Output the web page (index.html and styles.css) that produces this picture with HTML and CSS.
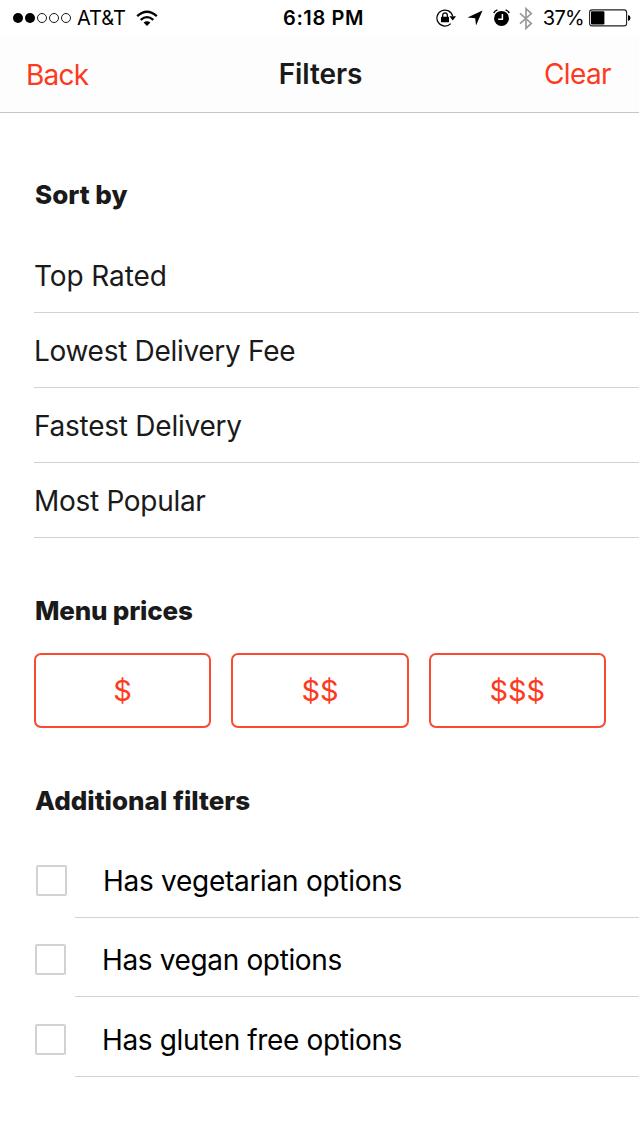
FILE: index.html
```html
<!DOCTYPE html>
<html lang="en">
<head>
    <meta charset="UTF-8">
    <meta name="viewport" content="width=device-width, initial-scale=1.0">
    <title>Filters</title>
    <link rel="stylesheet" href="styles.css">
</head>
<body>
    <div class="status-bar">
        <div class="status-left">
            <svg class="signal" width="58" height="12" viewBox="0 0 58 12">
                <circle cx="5" cy="6" r="5"/>
                <circle cx="17" cy="6" r="5"/>
                <g fill="none" stroke="#000" stroke-width="0.9">
                    <circle cx="29" cy="6" r="4.5"/>
                    <circle cx="41" cy="6" r="4.5"/>
                    <circle cx="53" cy="6" r="4.5"/>
                </g>
            </svg>
            <span class="carrier">AT&amp;T</span>
            <svg class="wifi" width="22" height="17" viewBox="0 0 22 17">
                <g fill="none" stroke="#000" stroke-width="2.3">
                    <path d="M1.2 6.2 Q11 -2.8 20.8 6.2"/>
                    <path d="M4.7 9.9 Q11 4.4 17.3 9.9"/>
                </g>
                <path d="M11 16 L7.6 12.6 Q11 9.8 14.4 12.6 Z"/>
            </svg>
        </div>
        <span class="time">6:18 PM</span>
        <div class="status-right">
            <svg width="20" height="18" viewBox="0 0 20 18">
                <path d="M16.7 7.2 A8 8 0 1 0 14.7 14.6" fill="none" stroke="#000" stroke-width="1.2"/>
                <path d="M13.4 7.2 H20 L16.8 11.4 Z"/>
                <rect x="5" y="7.7" width="8" height="5.6" rx="0.6"/>
                <path d="M6.7 8 V6.2 A2.3 2.3 0 0 1 11.3 6.2 V8" fill="none" stroke="#000" stroke-width="1.3"/>
            </svg>
            <svg class="location" width="16" height="16" viewBox="0 0 16 16">
                <path d="M15.5 0.5 L9 15.5 L8.2 8.2 L0.5 7.5 Z"/>
            </svg>
            <svg class="alarm" width="17" height="18" viewBox="0 0 17 18">
                <circle cx="8.5" cy="9.4" r="7.5"/>
                <path d="M0.8 4.1 Q1.6 1.8 4.4 0.9 M16.2 4.1 Q15.4 1.8 12.6 0.9" fill="none" stroke="#000" stroke-width="1.5"/>
                <path d="M9.4 5 V10.2 H5.2" fill="none" stroke="#fff" stroke-width="1.5"/>
            </svg>
            <svg class="bluetooth" width="14" height="23" viewBox="0 0 14 23">
                <path d="M1 6.3 L12.3 16.4 L7 21.3 V1.7 L12.3 6.6 L1 16.7" fill="none" stroke="#999" stroke-width="1.7"/>
            </svg>
            <span class="percent">37%</span>
            <svg class="battery" width="42" height="18" viewBox="0 0 42 18">
                <rect x="0.6" y="0.9" width="37" height="16" rx="2.5" fill="none" stroke="#222" stroke-width="1.1"/>
                <rect x="2" y="2.3" width="13.4" height="13.2" rx="1"/>
                <path d="M39 6 Q41.5 6.5 41.5 9 Q41.5 11.5 39 12 Z"/>
            </svg>
        </div>
    </div>

    <div class="navbar">
        <a class="back">Back</a>
        <h1 class="title">Filters</h1>
        <a class="clear">Clear</a>
    </div>

    <div class="content">
        <h2 class="heading sort-heading">Sort by</h2>
        <ul class="sort-list">
            <li class="top">Top Rated</li>
            <li class="lowest">Lowest Delivery Fee</li>
            <li class="fastest">Fastest Delivery</li>
            <li class="popular">Most Popular</li>
        </ul>

        <h2 class="heading price-heading">Menu prices</h2>
        <div class="prices">
            <button type="button">$</button>
            <button type="button">$$</button>
            <button type="button">$$$</button>
        </div>

        <h2 class="heading extra-heading">Additional filters</h2>
        <div class="options">
            <label class="option vegetarian">
                <input type="checkbox" name="vegetarian">
                <span>Has vegetarian options</span>
            </label>
            <label class="option vegan">
                <input type="checkbox" name="vegan">
                <span>Has vegan options</span>
            </label>
            <label class="option gluten">
                <input type="checkbox" name="gluten">
                <span>Has gluten free options</span>
            </label>
        </div>
    </div>
</body>
</html>
```
FILE: styles.css
```css
* {
    box-sizing: border-box;
}

body {
    margin: 0;
    font-family: Inter, "Liberation Sans", sans-serif;
    font-size: 28px;
    color: #1a1a1a;
    background-color: #fff;
}

.status-bar {
    display: grid;
    grid-template-columns: 1fr auto 1fr;
    align-items: center;
    height: 36px;
    padding: 0 8px 0 13px;
    font-size: 20px;
    color: #000;
}

.status-left,
.status-right {
    display: flex;
    align-items: center;
}

.status-right {
    justify-content: flex-end;
}

.carrier {
    margin-left: 6px;
}

.wifi {
    margin-left: 10px;
}

.time {
    padding-left: 3px;
    font-weight: 600;
    letter-spacing: 0.6px;
}

.location {
    margin-left: 11px;
}

.alarm {
    margin-left: 10px;
}

.bluetooth {
    margin-left: 9px;
}

.percent {
    margin: 0 5px 0 10px;
    letter-spacing: -0.7px;
}

.navbar {
    display: grid;
    grid-template-columns: 1fr auto 1fr;
    align-items: center;
    height: 77px;
    padding: 0 28px 0 26px;
    background-color: #fdfdfd;
    border-bottom: 1px solid #c6c6c6;
}

.back,
.clear {
    color: #fc3a20;
}

.back {
    padding-top: 2px;
    letter-spacing: -0.8px;
}

.clear {
    text-align: right;
    letter-spacing: -0.6px;
}

.title {
    margin: 0;
    padding-left: 4px;
    font-size: 28px;
    font-weight: 600;
    letter-spacing: -0.1px;
}

.content {
    padding-left: 34px;
}

.heading {
    margin: 0;
    padding-left: 1px;
    font-size: 26px;
    font-weight: 800;
    line-height: 32px;
}

.sort-heading {
    padding-top: 66px;
}

.sort-list {
    list-style: none;
    margin: 27px 0 0;
    padding: 0;
}

.sort-list li {
    height: 75px;
    line-height: 76px;
    letter-spacing: -0.3px;
    border-bottom: 1px solid #d2d2d2;
}

.sort-list .top {
    letter-spacing: -0.1px;
}

.sort-list .fastest {
    letter-spacing: -0.25px;
}

.price-heading {
    margin-top: 57px;
    letter-spacing: -0.2px;
}

.prices {
    display: flex;
    gap: 20px;
    margin: 26px 33px 0 0;
}

.prices button {
    flex: 1;
    height: 75px;
    padding: 0;
    font-family: inherit;
    font-size: 29px;
    color: #fc3a20;
    background-color: #fff;
    border: 2px solid #fc4a32;
    border-radius: 7px;
}

.extra-heading {
    margin-top: 57px;
}

.options {
    margin-top: 27px;
    color: #000;
}

.option {
    display: flex;
    align-items: center;
    height: 79px;
    padding-top: 4px;
    letter-spacing: -0.36px;
    /* divider starts to the right of the checkbox */
    background: linear-gradient(#d2d2d2, #d2d2d2) 41px 100% / 100% 1px no-repeat;
}

.option input {
    appearance: none;
    width: 31px;
    height: 31px;
    margin: 0 36px 0 1px;
    border: 2px solid #d2d2d2;
    border-radius: 2px;
}

.option.vegetarian {
    height: 74px;
    padding-top: 0;
    letter-spacing: -0.28px;
}

.option.vegetarian input {
    margin: 0 36px 1px 2px;
}

.option.gluten {
    height: 80px;
    padding-top: 5px;
}
```
